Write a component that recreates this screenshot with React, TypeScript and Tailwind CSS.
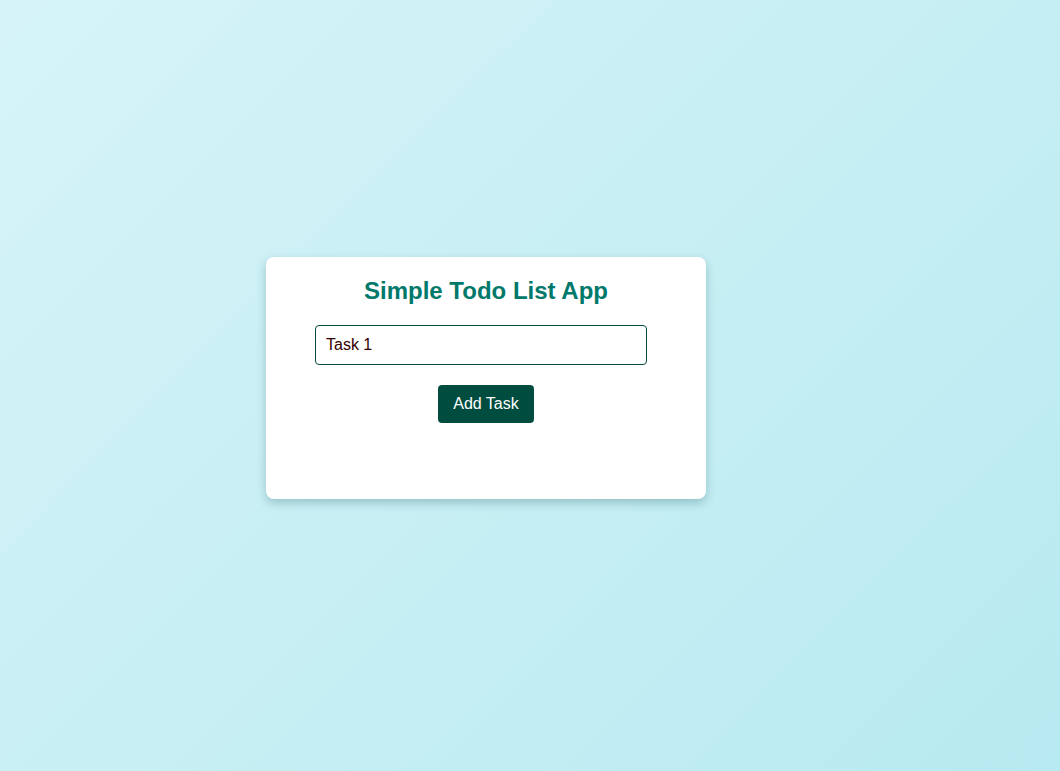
import { useState } from "react";

export default function App() {
  const [task, setTask] = useState("Task 1");
  const [tasks, setTasks] = useState<string[]>([]);

  const addTask = () => {
    if (!task.trim()) return;
    setTasks([...tasks, task]);
    setTask("");
  };

  return (
    <div
      className="min-h-screen w-full bg-[linear-gradient(135deg,#d6f4f7_0%,#b8eaf1_100%)] pl-[266px] pt-[257px]"
      style={{ fontFamily: '"Liberation Sans", Arial, sans-serif' }}
    >
      <div className="flex h-[242px] w-[440px] flex-col items-center rounded-lg bg-white px-5 pt-5 shadow-[0_4px_10px_rgba(0,60,70,0.25)]">
        <h1 className="text-[24px] font-bold leading-[28px] text-[#00796b]">
          Simple Todo List App
        </h1>
        <input
          value={task}
          onChange={(e) => setTask(e.target.value)}
          className="mt-5 ml-[29px] h-10 w-[332px] self-start rounded border border-[#004d40] px-[10px] text-[16px] text-[#330000] outline-none"
        />
        <button
          onClick={addTask}
          className="mt-5 h-[38px] w-24 rounded bg-[#004d40] text-[16px] text-white"
        >
          Add Task
        </button>
        <ul className="mt-2 w-[332px]">
          {tasks.map((t, i) => (
            <li key={i} className="text-[16px] text-[#333]">
              {t}
            </li>
          ))}
        </ul>
      </div>
    </div>
  );
}
